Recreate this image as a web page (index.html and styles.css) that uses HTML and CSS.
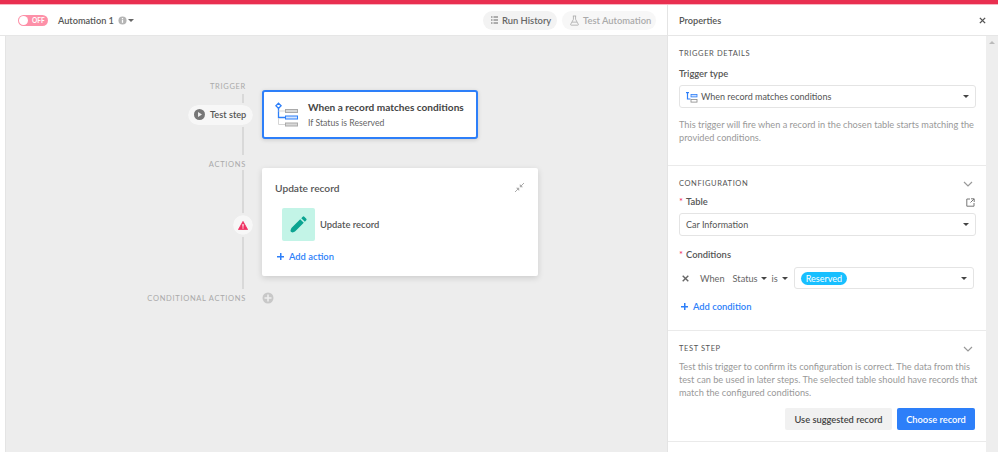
FILE: index.html
```html
<!DOCTYPE html>
<html lang="en">
<head>
    <meta charset="UTF-8">
    <meta name="viewport" content="width=device-width, initial-scale=1.0">
    <title>Automation 1</title>
    <link rel="stylesheet" href="styles.css">
</head>
<body>
    <div class="topbar"></div>
    <div class="app">
        <div class="gutter"></div>
        <main class="main">
            <header class="header">
                <div class="toggle"><span class="knob"></span><span>OFF</span></div>
                <div class="name">Automation 1</div>
                <svg class="info" width="9" height="9" viewBox="0 0 10 10"><circle cx="5" cy="5" r="4.5" fill="#b5b5b5"/><rect x="4.3" y="4.2" width="1.4" height="3.4" fill="#fff"/><rect x="4.3" y="2.2" width="1.4" height="1.3" fill="#fff"/></svg>
                <span class="caret caret-name"></span>
                <div class="header-actions">
                    <div class="pill-btn pill-history">
                        <svg width="7" height="8" viewBox="0 0 7 8" fill="none" stroke="#666" stroke-width="1"><path d="M0 1h1.5M2.5 1H7M0 4h1.5M2.5 4H7M0 7h1.5M2.5 7H7"/></svg>
                        <span>Run History</span>
                    </div>
                    <div class="pill-btn pill-test disabled">
                        <svg width="9" height="11" viewBox="0 0 11 13" fill="none" stroke="#aaa" stroke-width="1"><path d="M3.5 1h4M4.2 1v4L.8 11.2q-.3 1 .7 1h8q1 0 .7-1L6.8 5V1M2.5 8.5h6"/></svg>
                        <span>Test Automation</span>
                    </div>
                </div>
            </header>
            <section class="canvas">
                <div class="rail rail-trigger"></div>
                <div class="rail rail-actions"></div>

                <div class="flow-label label-trigger">TRIGGER</div>
                <div class="flow-row trigger-row">
                    <div class="flow-side">
                        <div class="test-pill">
                            <svg width="11" height="11" viewBox="0 0 11 11"><circle cx="5.5" cy="5.5" r="5.5" fill="#777"/><path d="M4 3l4 2.5L4 8z" fill="#eee"/></svg>
                            <span>Test step</span>
                        </div>
                    </div>
                    <div class="trigger-card">
                        <svg class="trigger-icon" width="24" height="26" viewBox="0 0 24 26" fill="none">
                            <path d="M3.5 6v9.5h7" stroke="#2d7ff9" stroke-width="1.3"/>
                            <path d="M3.5 9h7M3.5 16v6.5h7" stroke="#d5d5d5" stroke-width="1"/>
                            <path d="M3.5 1.2l2.6 2.6-2.6 2.6L.9 3.8z" fill="#fff" stroke="#2d7ff9" stroke-width="1.3"/>
                            <rect x="10.5" y="7.5" width="12" height="3" fill="#d8d8d8" stroke="#aaa"/>
                            <rect x="10.5" y="14" width="12" height="3" fill="#d5e5fd" stroke="#2d7ff9"/>
                            <rect x="10.5" y="21" width="12" height="3" fill="#d8d8d8" stroke="#aaa"/>
                        </svg>
                        <div>
                            <div class="trigger-title">When a record matches conditions</div>
                            <div class="trigger-sub">If Status is Reserved</div>
                        </div>
                    </div>
                </div>

                <div class="flow-label label-actions">ACTIONS</div>
                <div class="flow-row action-row">
                    <div class="flow-side">
                        <div class="warn">
                            <svg width="10" height="9" viewBox="0 0 12 11"><path d="M6 .5l5.6 10H.4z" fill="#ef3061" stroke="#ef3061" stroke-linejoin="round"/><rect x="5.3" y="3.6" width="1.4" height="3.4" fill="#fff"/><rect x="5.3" y="7.8" width="1.4" height="1.4" fill="#fff"/></svg>
                        </div>
                    </div>
                    <div class="action-card">
                        <div class="action-head">
                            <span>Update record</span>
                            <svg width="11" height="11" viewBox="0 0 11 11" fill="#aaa"><path d="M7 4L10 1M4 7L1 10" stroke="#aaa"/><path d="M5.8 2v3.2H9zM5.2 9V5.8H2z"/></svg>
                        </div>
                        <div class="action-item">
                            <div class="action-tile">
                                <svg width="17" height="17" viewBox="0 0 19 19"><path d="M1.4 17.8q-1.2-.4-.8-1.8l1-2.6L11.4 3.6l4 4-9.8 9.8-2.6 1z" fill="#0ba491"/><path d="M12.6 2.4l1.6-1.6q1-.8 1.8 0l2.2 2.2q.8.8 0 1.8l-1.6 1.6z" fill="#0ba491"/></svg>
                            </div>
                            <span>Update record</span>
                        </div>
                        <div class="add-link add-action"><span class="plus"></span>Add action</div>
                    </div>
                </div>

                <div class="flow-row conditional-row">
                    <div class="flow-side conditional-label">CONDITIONAL ACTIONS</div>
                    <svg width="12" height="12" viewBox="0 0 12 12"><circle cx="6" cy="6" r="5.5" fill="#c8c8c8"/><path d="M6 2.5v7M2.5 6h7" stroke="#eee" stroke-width="1.6"/></svg>
                </div>
            </section>
        </main>

        <aside class="panel">
            <div class="panel-head">
                <span>Properties</span>
                <svg width="7" height="7" viewBox="0 0 8 8" stroke="#555" stroke-width="1.6"><path d="M1 1l6 6M7 1L1 7"/></svg>
            </div>
            <div class="panel-body">
                <div class="panel-scroll">
                    <div class="section section-details">
                        <div class="section-title">TRIGGER DETAILS</div>
                        <div class="field-label label-type">Trigger type</div>
                        <div class="select select-type">
                            <svg width="12" height="12" viewBox="0 0 12 12" fill="none"><path d="M1.5 1v7h3" stroke="#2d7ff9" stroke-width="1.2"/><path d="M0 1.6h3" stroke="#2d7ff9" stroke-width="1.2"/><rect x="5" y="3.5" width="6" height="2.4" fill="#cfe0fc" stroke="#2d7ff9" stroke-width=".8"/><rect x="5" y="8.5" width="6" height="2.6" stroke="#888" stroke-width=".8"/></svg>
                            <span>When record matches conditions</span>
                            <span class="caret caret-end"></span>
                        </div>
                        <p class="help help-details">This trigger will fire when a record in the chosen table starts matching the provided conditions.</p>
                    </div>
                    <div class="section section-config">
                        <div class="section-row">
                            <div class="section-title">CONFIGURATION</div>
                            <svg class="chev" width="10" height="6" viewBox="0 0 10 6" fill="none" stroke="#999" stroke-width="1.2"><path d="M1 1l4 4 4-4"/></svg>
                        </div>
                        <div class="section-row field-label label-table">
                            <div><span class="req">*</span>Table</div>
                            <svg width="9" height="9" viewBox="0 0 9 9" fill="none" stroke="#777" stroke-width="1"><path d="M4 1H.8v7.2H8V5M5 .8h3.2V4M8 1L4.5 4.5"/></svg>
                        </div>
                        <div class="select select-table">
                            <span>Car Information</span>
                            <span class="caret caret-end"></span>
                        </div>
                        <div class="field-label label-conditions"><span class="req">*</span>Conditions</div>
                        <div class="condition">
                            <svg class="cond-x" width="7" height="7" viewBox="0 0 7 7" stroke="#666" stroke-width="1.4"><path d="M.7.7l5.6 5.6M6.3.7L.7 6.3"/></svg>
                            <span class="cond-when">When</span>
                            <span class="cond-field">Status</span><span class="caret caret-status"></span>
                            <span class="cond-is">is</span><span class="caret caret-is"></span>
                            <div class="select select-value">
                                <span class="status-tag">Reserved</span>
                                <span class="caret caret-end"></span>
                            </div>
                        </div>
                        <div class="add-link add-condition"><span class="plus"></span>Add condition</div>
                    </div>
                    <div class="section section-test">
                        <div class="section-row">
                            <div class="section-title">TEST STEP</div>
                            <svg class="chev" width="10" height="6" viewBox="0 0 10 6" fill="none" stroke="#999" stroke-width="1.2"><path d="M1 1l4 4 4-4"/></svg>
                        </div>
                        <p class="help help-test">Test this trigger to confirm its configuration is correct. The data from this test can be used in later steps. The selected table should have records that match the configured conditions.</p>
                        <div class="test-buttons">
                            <button class="btn btn-grey" type="button">Use suggested record</button>
                            <button class="btn btn-blue" type="button">Choose record</button>
                        </div>
                    </div>
                </div>
                <div class="scrollbar"><span class="scroll-arrow"></span></div>
            </div>
        </aside>
    </div>
</body>
</html>
```

FILE: styles.css
```css
* {
    box-sizing: border-box;
}

html, body {
    height: 100%;
}

body {
    margin: 0;
    overflow: hidden;
    font-family: Lato, "Open Sans", Arial, sans-serif;
    font-size: 9.2px;
    color: #444;
    background: #fff;
}

.topbar {
    height: 5px;
    background: #e92f50;
    border-bottom: 1px solid #f8b6c2;
}

.app {
    display: flex;
    height: 447px;
}

.gutter {
    width: 6px;
    margin-top: 31px;
    border-right: 1px solid #e4e4e4;
}

.main {
    width: 661px;
    display: flex;
    flex-direction: column;
}

/* header */
.header {
    height: 31px;
    margin-left: -6px;
    padding: 0 11px 0 18px;
    display: flex;
    align-items: center;
    border-bottom: 1px solid #e6e6e6;
    background: #fff;
}

.toggle {
    width: 30px;
    height: 11px;
    border-radius: 6px;
    background: #fd90a8;
    display: flex;
    align-items: center;
    padding-left: 1px;
    gap: 4px;
    font-size: 6.5px;
    font-weight: 700;
    color: #fff;
}

.knob {
    width: 9px;
    height: 9px;
    border-radius: 50%;
    background: #fff;
}

.name {
    margin-left: 10px;
    font-size: 9.2px;
    font-weight: 600;
    color: #555;
}

.info {
    margin-left: 4px;
}

.caret {
    display: inline-block;
    flex: none;
    width: 0;
    height: 0;
    border-left: 3px solid transparent;
    border-right: 3px solid transparent;
    border-top: 3.5px solid #444;
}

.caret-name {
    margin-left: 1px;
    border-top-color: #666;
}

.header-actions {
    margin-left: auto;
    display: flex;
    gap: 5px;
}

.pill-btn {
    height: 19px;
    display: flex;
    align-items: center;
    gap: 4px;
    border-radius: 10px;
    background: #f3f3f3;
    font-size: 9.4px;
    font-weight: 600;
    color: #666;
    white-space: nowrap;
}

.pill-history {
    width: 74px;
    padding-left: 8px;
}

.pill-test {
    width: 94px;
    padding-left: 8px;
}

.pill-btn.disabled {
    color: #aaa;
    background: #f7f7f7;
}

/* canvas */
.canvas {
    position: relative;
    flex: 1;
    background: #ededed;
    padding-top: 46px;
}

.rail {
    position: absolute;
    left: 236px;
    width: 2px;
    background: #d9d9d9;
}

.rail-trigger {
    top: 58px;
    height: 61px;
}

.rail-actions {
    top: 134px;
    height: 119px;
}

.flow-label, .conditional-label {
    font-size: 7.5px;
    letter-spacing: .7px;
    color: #a9a9a9;
}

.flow-label {
    width: 240px;
    text-align: right;
    line-height: 10px;
}

.flow-row {
    display: flex;
    position: relative;
}

.flow-side {
    width: 256px;
    flex: none;
    padding-right: 9px;
    display: flex;
    justify-content: flex-end;
    align-items: center;
}

.trigger-row {
    height: 49px;
    margin-top: -2px;
}

.test-pill {
    height: 20px;
    width: 65px;
    padding-left: 6px;
    display: flex;
    align-items: center;
    gap: 5px;
    border-radius: 10px;
    background: #f7f7f7;
    color: #555;
    font-size: 9.2px;
    font-weight: 600;
    white-space: nowrap;
    outline: 2px solid #ededed;
}

.trigger-card {
    width: 216px;
    height: 49px;
    display: flex;
    align-items: center;
    gap: 9px;
    padding-left: 11px;
    background: #fff;
    border: 2px solid #2d7ff9;
    border-radius: 3px;
    box-shadow: 0 1px 4px rgba(0,0,0,0.15);
}

.trigger-icon {
    flex: none;
}

.trigger-title {
    font-size: 10.1px;
    font-weight: 700;
    color: #444;
    white-space: nowrap;
}

.trigger-sub {
    margin-top: 4px;
    font-size: 8.7px;
    color: #666;
}

.label-actions {
    margin-top: 21px;
}

.action-row {
    height: 108px;
    margin-top: -2px;
}

.warn {
    width: 20px;
    height: 20px;
    display: flex;
    align-items: center;
    justify-content: center;
    border-radius: 50%;
    background: #f7f7f7;
    outline: 2px solid #ededed;
    margin-top: 6px;
}

.action-card {
    width: 276px;
    height: 108px;
    padding: 14px 13px 0;
    background: #fff;
    border-radius: 2px;
    box-shadow: 0 2px 6px rgba(0,0,0,0.14);
}

.action-head {
    display: flex;
    justify-content: space-between;
    font-size: 10.2px;
    font-weight: 600;
    color: #555;
}

.action-item {
    margin: 14px 0 0 7px;
    display: flex;
    align-items: center;
    gap: 5px;
    font-size: 9.4px;
    font-weight: 600;
    color: #555;
}

.action-tile {
    width: 33px;
    height: 33px;
    display: flex;
    align-items: center;
    justify-content: center;
    border-radius: 2px;
    background: #c3f4e7;
}

.add-link {
    display: flex;
    align-items: center;
    gap: 5px;
    font-size: 9.4px;
    font-weight: 600;
    color: #2d7ff9;
}

.plus {
    width: 7px;
    height: 7px;
    background: linear-gradient(#2d7ff9, #2d7ff9) center / 100% 1.5px no-repeat, linear-gradient(#2d7ff9, #2d7ff9) center / 1.5px 100% no-repeat;
}

.add-action {
    margin: 10px 0 0 2px;
}

.conditional-row {
    margin-top: 15px;
    height: 14px;
    align-items: center;
}

.conditional-label {
    white-space: nowrap;
    padding-right: 16px;
    width: 256px;
}

/* properties panel */
.panel {
    width: 331px;
    display: flex;
    flex-direction: column;
    border-left: 1px solid #e4e4e4;
}

.panel-head {
    height: 31px;
    padding: 0 12px 0 11px;
    display: flex;
    justify-content: space-between;
    align-items: center;
    border-bottom: 1px solid #e6e6e6;
    font-size: 9.2px;
    font-weight: 600;
    color: #555;
}

.panel-body {
    flex: 1;
    display: flex;
    min-height: 0;
}

.panel-scroll {
    flex: 1;
    min-width: 0;
}

.scrollbar {
    width: 12px;
    background: #eee;
    display: flex;
    justify-content: center;
    padding-top: 5px;
}

.scroll-arrow {
    width: 0;
    height: 0;
    border-left: 3px solid transparent;
    border-right: 3px solid transparent;
    border-bottom: 3px solid #bbb;
}

.section {
    padding: 0 11px;
    border-bottom: 1px solid #eaeaea;
}

.section-details {
    height: 130px;
    padding-top: 13px;
}

.section-config {
    height: 165px;
    padding-top: 13px;
}

.section-test {
    height: 111px;
    padding-top: 13px;
}

.section-title {
    font-size: 7.5px;
    letter-spacing: .6px;
    color: #555;
    line-height: 10px;
}

.section-row {
    display: flex;
    justify-content: space-between;
    align-items: center;
}

.chev {
    margin-right: 2px;
}

.field-label {
    font-size: 9.4px;
    font-weight: 600;
    color: #555;
    line-height: 14px;
}

.label-type {
    margin-top: 8px;
}

.label-table {
    margin-top: 6px;
}

.label-conditions {
    margin-top: 12px;
}

.req {
    color: #ef3061;
    margin-right: 3px;
    font-weight: 400;
}

.select {
    height: 23px;
    display: flex;
    align-items: center;
    gap: 3px;
    padding: 0 6px;
    background: #fff;
    border: 1px solid #e4e4e4;
    border-radius: 3px;
    font-size: 9px;
    color: #555;
}

.select-type {
    margin-top: 4px;
    width: 297px;
}

.select-table {
    margin-top: 4px;
    width: 297px;
}

.caret-end {
    margin-left: auto;
}

.help {
    margin: 0;
    font-size: 9.2px;
    line-height: 13px;
    color: #999;
}

.help-details {
    margin-top: 10px;
    width: 300px;
}

.condition {
    margin-top: 5px;
    display: flex;
    align-items: center;
    font-size: 9.2px;
    color: #666;
}

.cond-x {
    margin: 0 11px 0 3px;
}

.cond-when {
    margin-right: 8px;
}

.caret-status {
    margin: 0 5px 0 3px;
}

.caret-is {
    margin: 0 6px 0 4px;
}

.select-value {
    flex: 1;
    height: 22px;
    margin-right: 1px;
}

.status-tag {
    height: 13px;
    padding: 0 5px;
    display: flex;
    align-items: center;
    border-radius: 7px;
    background: #18bfff;
    color: #fff;
}

.add-condition {
    margin: 12px 0 0 2px;
}

.help-test {
    margin-top: 6px;
    width: 300px;
}

.test-buttons {
    margin-top: 9px;
    display: flex;
    justify-content: flex-end;
    gap: 5px;
}

.btn {
    height: 22px;
    border: none;
    border-radius: 2px;
    font-family: inherit;
    font-size: 9.3px;
    font-weight: 600;
    padding: 0;
}

.btn-grey {
    width: 107px;
    background: #f1f1f1;
    color: #444;
}

.btn-blue {
    width: 78px;
    background: #2d7ff9;
    color: #fff;
}
```
